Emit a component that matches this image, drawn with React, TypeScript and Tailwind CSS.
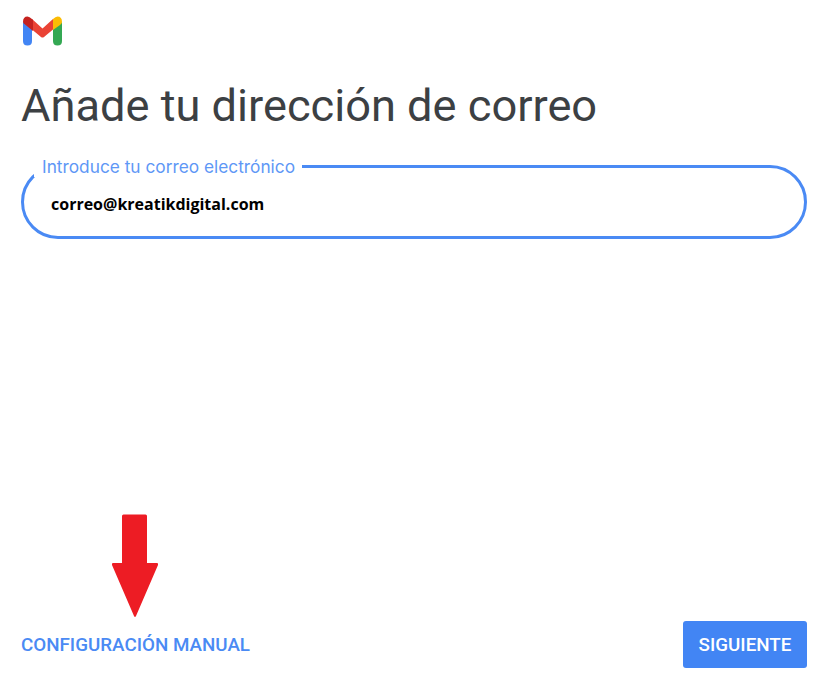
import React from "react";

function GmailLogo() {
  return (
    <svg width="40" height="30" viewBox="0 0 40 30" fill="none">
      <path d="M0 6 L0 25 Q0 29.5 4.5 29.5 Q9 29.5 9 25 L9 11 Z" fill="#4285f4" />
      <path d="M30 12 L30 25 Q30 29.5 34.5 29.5 Q39 29.5 39 25 L39 6 Z" fill="#34a853" />
      <path d="M9 3 L19.5 12.5 L30 3 L30 13.5 L21 21 Q19.5 22 18 21 L9 13.5 Z" fill="#ea4335" />
      <path d="M0 6 Q0 0.5 4.5 0.5 Q6.5 0.5 9 3 L10 4 L10 15 L2 8.5 Q0 7 0 6 Z" fill="#c5221f" />
      <path d="M30 3 Q32.5 0.5 34.5 0.5 Q39 0.5 39 6 Q39 7.5 37 9 L30 14 Z" fill="#fbbc04" />
    </svg>
  );
}

function RedArrow() {
  return (
    <svg width="48" height="104" viewBox="0 0 48 104" fill="none">
      <path
        d="M11 2 Q11 0.5 12.5 0.5 L34.5 0.5 Q36 0.5 36 2 L36 49 L46 49 Q47.5 49 47 51 L25 102 Q24 104 23 102 L1 51 Q0.5 49 2 49 L11 49 Z"
        fill="#ed1c24"
      />
    </svg>
  );
}

export default function App() {
  return (
    <div className="relative flex h-[681px] w-[818px] flex-col overflow-hidden bg-white pl-[21px] pr-[11px] font-['Roboto',sans-serif]">
      <div className="pl-[2px] pt-[16px]">
        <GmailLogo />
      </div>

      <h1 className="mt-[28px] text-[45.2px] leading-[64px] text-[#3c4043]">Añade tu dirección de correo</h1>

      <div className="relative mt-[27px] flex h-[74px] items-center rounded-[37px] border-[3px] border-[#4a8af4] pl-[27px]">
        <span className="absolute left-[10px] top-[-11px] bg-white pl-[8px] pr-[7px] font-['Inter',sans-serif] text-[17.3px] leading-[20px] text-[#5e97f6]">
          Introduce tu correo electrónico
        </span>
        <span className="mt-[3px] font-['Open_Sans',sans-serif] text-[16px] font-bold text-black">correo@kreatikdigital.com</span>
      </div>

      <div className="mt-auto flex items-center justify-between pb-[13px]">
        <span className="mt-[2px] text-[18.8px] font-medium text-[#4a8af4]">CONFIGURACIÓN MANUAL</span>
        <button className="flex h-[47px] w-[124px] items-center justify-center rounded-[3px] bg-[#4285f4] pt-[2px] text-[18.8px] font-medium text-white">
          SIGUIENTE
        </button>
      </div>

      <div className="absolute left-[111px] top-[514px]">
        <RedArrow />
      </div>
    </div>
  );
}
